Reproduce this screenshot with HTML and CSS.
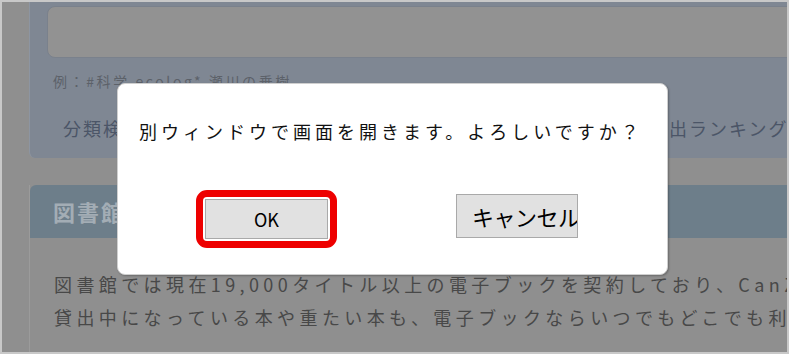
FILE: index.html
```html
<!DOCTYPE html>
<html lang="ja">
<head>
  <meta charset="UTF-8" />
  <meta name="viewport" content="width=device-width, initial-scale=1.0" />
  <title>電子ブック検索</title>
  <link rel="stylesheet" href="styles.css">
</head>
<body>
  <div class="frame">
    <section class="search-card">
      <div class="search-input"></div>
      <p class="search-hint">例：#科学 ecolog* 瀬川の乗樹</p>
      <nav class="search-links">
        <a class="search-link">分類検索</a>
        <a class="search-link">貸出ランキング</a>
      </nav>
    </section>

    <section class="info-card">
      <h2 class="info-title">図書館の電子ブック</h2>
      <p class="info-text">図書館では現在19,000タイトル以上の電子ブックを契約しており、CanZ<br>貸出中になっている本や重たい本も、電子ブックならいつでもどこでも利用</p>
    </section>

    <div class="dialog" role="dialog">
      <p class="dialog-message">別ウィンドウで画面を開きます。よろしいですか？</p>
      <div class="dialog-buttons">
        <div class="focus-ring">
          <button class="dialog-button ok-button">OK</button>
        </div>
        <button class="dialog-button cancel-button">キャンセル</button>
      </div>
    </div>
  </div>
</body>
</html>
```

FILE: styles.css
```css
html, body {
  margin: 0;
  background: #8f8f8f;
}
.frame {
  position: relative;
  width: 789px;
  height: 354px;
  box-sizing: border-box;
  border: 2px solid #c8c8c8;
  overflow: hidden;
  background: #8f8f8f;
  font-family: "Noto Sans CJK JP", "Noto Sans", sans-serif;
}

/* dimmed search panel behind the dialog */
.search-card {
  margin-left: 27px;
  width: 800px;
  height: 156px;
  box-sizing: border-box;
  padding-top: 4px;
  background: #7f8793;
  border-left: 1px solid #8d95a1;
  border-radius: 0 0 6px 6px;
}
.search-input {
  margin-left: 17px;
  height: 52px;
  box-sizing: border-box;
  background: #929292;
  border: 1px solid #7a818c;
  border-radius: 8px;
}
.search-hint {
  margin: 15px 0 0 23px;
  font-size: 14px;
  line-height: 16px;
  letter-spacing: 2.6px;
  color: #5c6169;
}
.search-links {
  display: grid;
  grid-template-columns: 586px auto;
  margin: 29px 0 0 33px;
  font-size: 18px;
  line-height: 20px;
  letter-spacing: 2px;
  white-space: nowrap;
}
.search-link {
  color: #4b5567;
}

/* dimmed info panel */
.info-card {
  margin: 27px 0 0 27px;
  width: 800px;
  height: 200px;
  border-left: 1px solid #9b9b9b;
}
.info-title {
  margin: 0;
  height: 53px;
  padding-left: 23px;
  background: #6d7e8a;
  border-radius: 6px 0 0 0;
  font-size: 22px;
  font-weight: bold;
  line-height: 53px;
  letter-spacing: 2px;
  color: #a3adb5;
}
.info-text {
  margin: 30px 0 0 24px;
  font-size: 18px;
  line-height: 33px;
  letter-spacing: 4.4px;
  color: #484848;
  white-space: nowrap;
}

/* confirm dialog */
.dialog {
  position: absolute;
  left: 115px;
  top: 81px;
  width: 551px;
  height: 192px;
  box-sizing: border-box;
  background: #fff;
  border: 1px solid #cfcfcf;
  border-radius: 8px;
  box-shadow: 1px 1px 2px rgba(0, 0, 0, 0.25);
  padding: 36px 0 0 21px;
}
.dialog-message {
  margin: 0;
  font-size: 18px;
  line-height: 22px;
  letter-spacing: 4px;
  color: #111;
}
.dialog-buttons {
  display: flex;
  align-items: center;
  gap: 119px;
  margin: 48px 0 0 57px;
}
.focus-ring {
  display: flex;
  padding: 2px;
  border: 7px solid #ee0000;
  border-radius: 11px;
}
.dialog-button {
  box-sizing: border-box;
  background: #e1e1e1;
  border: 1px solid #a9a9a9;
  border-radius: 0;
  color: #000;
  font-family: "Noto Sans CJK JP", "Noto Sans", sans-serif;
  padding: 0;
}
.ok-button {
  width: 123px;
  height: 40px;
  font-size: 18px;
}
.cancel-button {
  width: 122px;
  height: 44px;
  margin-top: -6px;
  padding-left: 15px;
  text-align: left;
  font-size: 22px;
  letter-spacing: -0.5px;
  white-space: nowrap;
  overflow: hidden;
}
```
